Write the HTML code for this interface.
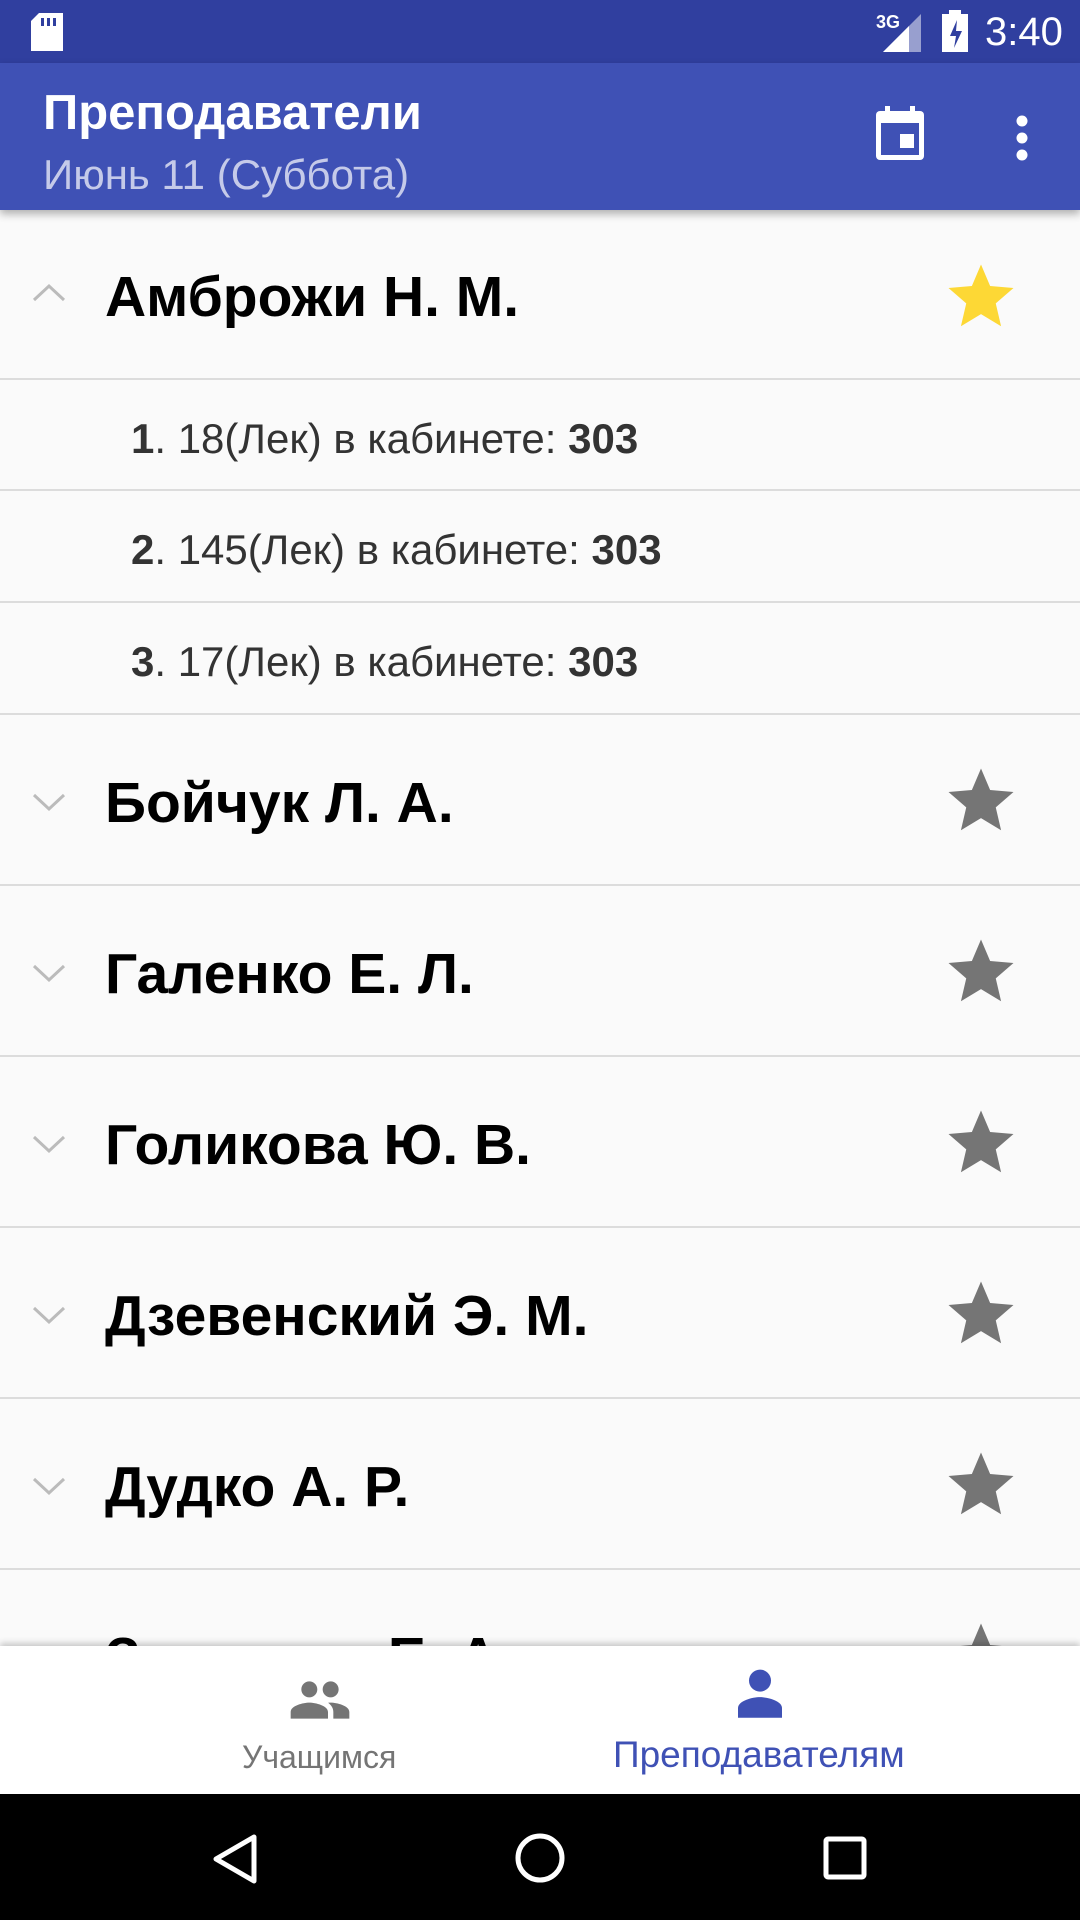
<!DOCTYPE html>
<html><head><meta charset="utf-8"><style>
*{margin:0;padding:0;box-sizing:border-box}
body{width:1080px;height:1920px;overflow:hidden;background:#fafafa;font-family:"Liberation Sans","Noto Sans CJK SC",sans-serif;position:relative}
.sb{position:absolute;top:0;left:0;width:1080px;height:63px;background:#303f9f;color:#fff}
.ab{position:absolute;top:63px;left:0;width:1080px;height:147px;background:#3f51b5;box-shadow:0 4px 8px rgba(0,0,0,.3);z-index:2}
.t1{position:absolute;left:43px;top:22px;font-size:49px;color:#fff;font-weight:bold}
.t2{position:absolute;left:43px;top:88px;font-size:42px;color:#c5cae9}
.row{position:absolute;left:0;width:1080px;border-bottom:2px solid #dcdcdc}
.name{position:absolute;left:105px;font-size:57px;font-weight:bold;color:#000}
.sub{position:absolute;left:131px;font-size:42px;color:#333}
.star{position:absolute;left:942px}
.chev{position:absolute;left:32px}
.bn{position:absolute;top:1646px;left:0;width:1080px;height:148px;background:#fff;box-shadow:0 -3px 6px rgba(0,0,0,.2);z-index:2}
.nv{position:absolute;top:1794px;left:0;width:1080px;height:126px;background:#000}
</style></head><body>
<div class="sb">
<svg style="position:absolute;left:31px;top:13px" width="32" height="38" viewBox="0 0 32 38"><path d="M8 0h24v38H0V8z" fill="#fff"/><rect x="10" y="5" width="3" height="8" fill="#303f9f"/><rect x="16" y="5" width="3" height="8" fill="#303f9f"/><rect x="22" y="5" width="3" height="8" fill="#303f9f"/></svg>
<div style="position:absolute;left:876px;top:12px;color:#fff;font-size:18px;font-weight:bold">3G</div>
<svg style="position:absolute;left:883px;top:14px" width="38" height="38"><path d="M38 0V38H0z" fill="#fff" opacity=".5"/><path d="M26 12V38H0z" fill="#fff"/></svg>
<svg style="position:absolute;left:942px;top:10px" width="26" height="42"><rect x="7" y="0" width="12" height="4" fill="#fff"/><rect x="0" y="4" width="26" height="38" fill="#fff"/><path d="M15 10l-7 16h6l-2 12 8-17h-6z" fill="#303f9f"/></svg>
<div style="position:absolute;left:985px;top:10px;color:#fff;font-size:40px">3:40</div>
</div>
<div class="ab">
<div class="t1">Преподаватели</div>
<div class="t2">Июнь 11 (Суббота)</div>
<svg style="position:absolute;left:874px;top:43px" width="52" height="56" viewBox="0 0 52 56"><rect x="11" y="0" width="5" height="9" fill="#fff"/><rect x="36" y="0" width="5" height="9" fill="#fff"/><rect x="2" y="5" width="48" height="49" rx="4" fill="#fff"/><rect x="7" y="17" width="38" height="32" fill="#3f51b5"/><rect x="26" y="28" width="14" height="14" fill="#fff"/></svg>
<svg style="position:absolute;left:1016px;top:52px" width="12" height="46"><circle cx="6" cy="6" r="5.5" fill="#fff"/><circle cx="6" cy="23" r="5.5" fill="#fff"/><circle cx="6" cy="40" r="5.5" fill="#fff"/></svg>
</div>

<div class="row" style="top:210px;height:170px">
<svg class="chev" style="top:72px" width="34" height="20"><path d="M2 18L17 4l15 14" stroke="#bbb" stroke-width="3" fill="none"/></svg>
<div class="name" style="top:54px">Амброжи Н. М.</div>
<svg class="star" style="top:48px" width="78" height="78" viewBox="0 0 24 24"><path d="M12 17.27L18.18 21l-1.64-7.03L22 9.24l-7.19-.61L12 2 9.19 8.63 2 9.24l5.46 4.73L5.82 21z" fill="#fdd835"/></svg>
</div>
<div class="row" style="top:380px;height:111px"><div class="sub" style="top:35px"><b>1</b>. 18(Лек) в кабинете: <b>303</b></div></div>
<div class="row" style="top:491px;height:112px"><div class="sub" style="top:35px"><b>2</b>. 145(Лек) в кабинете: <b>303</b></div></div>
<div class="row" style="top:603px;height:112px"><div class="sub" style="top:35px"><b>3</b>. 17(Лек) в кабинете: <b>303</b></div></div>

<div class="row" style="top:715px;height:171px"><svg class="chev" style="top:78px" width="34" height="20"><path d="M2 2l15 14L32 2" stroke="#bbb" stroke-width="3" fill="none"/></svg><div class="name" style="top:55px">Бойчук Л. А.</div><svg class="star" style="top:47px" width="78" height="78" viewBox="0 0 24 24"><path d="M12 17.27L18.18 21l-1.64-7.03L22 9.24l-7.19-.61L12 2 9.19 8.63 2 9.24l5.46 4.73L5.82 21z" fill="#757575"/></svg></div>
<div class="row" style="top:886px;height:171px"><svg class="chev" style="top:78px" width="34" height="20"><path d="M2 2l15 14L32 2" stroke="#bbb" stroke-width="3" fill="none"/></svg><div class="name" style="top:55px">Галенко Е. Л.</div><svg class="star" style="top:47px" width="78" height="78" viewBox="0 0 24 24"><path d="M12 17.27L18.18 21l-1.64-7.03L22 9.24l-7.19-.61L12 2 9.19 8.63 2 9.24l5.46 4.73L5.82 21z" fill="#757575"/></svg></div>
<div class="row" style="top:1057px;height:171px"><svg class="chev" style="top:78px" width="34" height="20"><path d="M2 2l15 14L32 2" stroke="#bbb" stroke-width="3" fill="none"/></svg><div class="name" style="top:55px">Голикова Ю. В.</div><svg class="star" style="top:47px" width="78" height="78" viewBox="0 0 24 24"><path d="M12 17.27L18.18 21l-1.64-7.03L22 9.24l-7.19-.61L12 2 9.19 8.63 2 9.24l5.46 4.73L5.82 21z" fill="#757575"/></svg></div>
<div class="row" style="top:1228px;height:171px"><svg class="chev" style="top:78px" width="34" height="20"><path d="M2 2l15 14L32 2" stroke="#bbb" stroke-width="3" fill="none"/></svg><div class="name" style="top:55px">Дзевенский Э. М.</div><svg class="star" style="top:47px" width="78" height="78" viewBox="0 0 24 24"><path d="M12 17.27L18.18 21l-1.64-7.03L22 9.24l-7.19-.61L12 2 9.19 8.63 2 9.24l5.46 4.73L5.82 21z" fill="#757575"/></svg></div>
<div class="row" style="top:1399px;height:171px"><svg class="chev" style="top:78px" width="34" height="20"><path d="M2 2l15 14L32 2" stroke="#bbb" stroke-width="3" fill="none"/></svg><div class="name" style="top:55px">Дудко А. Р.</div><svg class="star" style="top:47px" width="78" height="78" viewBox="0 0 24 24"><path d="M12 17.27L18.18 21l-1.64-7.03L22 9.24l-7.19-.61L12 2 9.19 8.63 2 9.24l5.46 4.73L5.82 21z" fill="#757575"/></svg></div>
<div class="row" style="top:1570px;height:171px;border:none"><div class="name" style="top:55px">Зинченко Е. А.</div><svg class="star" style="top:47px" width="78" height="78" viewBox="0 0 24 24"><path d="M12 17.27L18.18 21l-1.64-7.03L22 9.24l-7.19-.61L12 2 9.19 8.63 2 9.24l5.46 4.73L5.82 21z" fill="#757575"/></svg></div>

<div class="bn">
<svg style="position:absolute;left:288px;top:32px" width="64" height="44" viewBox="0 0 24 16"><path d="M16 7c1.66 0 2.99-1.34 2.99-3S17.66 1 16 1c-1.66 0-3 1.34-3 3s1.34 3 3 3zm-8 0c1.66 0 2.99-1.34 2.99-3S9.66 1 8 1C6.34 1 5 2.34 5 4s1.34 3 3 3zm0 2c-2.33 0-7 1.17-7 3.5V15h14v-2.5C15 10.17 10.33 9 8 9zm8 0c-.29 0-.62.02-.97.05 1.16.84 1.97 1.97 1.97 3.45V15h6v-2.5c0-2.33-4.67-3.5-7-3.5z" fill="#757575"/></svg>
<div style="position:absolute;left:242px;top:93px;font-size:32px;color:#757575">Учащимся</div>
<svg style="position:absolute;left:738px;top:22px" width="44" height="50" viewBox="0 0 16 18"><circle cx="8" cy="4.5" r="4" fill="#3f51b5"/><path d="M8 10.5c-2.7 0-8 1.3-8 4V18h16v-3.5c0-2.7-5.3-4-8-4z" fill="#3f51b5"/></svg>
<div style="position:absolute;left:613px;top:88px;font-size:37px;color:#3f51b5">Преподавателям</div>
</div>
<div class="nv">
<svg style="position:absolute;left:212px;top:40px" width="46" height="50"><path d="M42 3L4 25l38 22z" stroke="#fff" stroke-width="5" fill="none" stroke-linejoin="round"/></svg>
<svg style="position:absolute;left:514px;top:38px" width="52" height="52"><circle cx="26" cy="26" r="22" stroke="#fff" stroke-width="5" fill="none"/></svg>
<svg style="position:absolute;left:823px;top:42px" width="44" height="44"><rect x="3" y="3" width="38" height="38" rx="2" stroke="#fff" stroke-width="5" fill="none"/></svg>
</div>
</body></html>
